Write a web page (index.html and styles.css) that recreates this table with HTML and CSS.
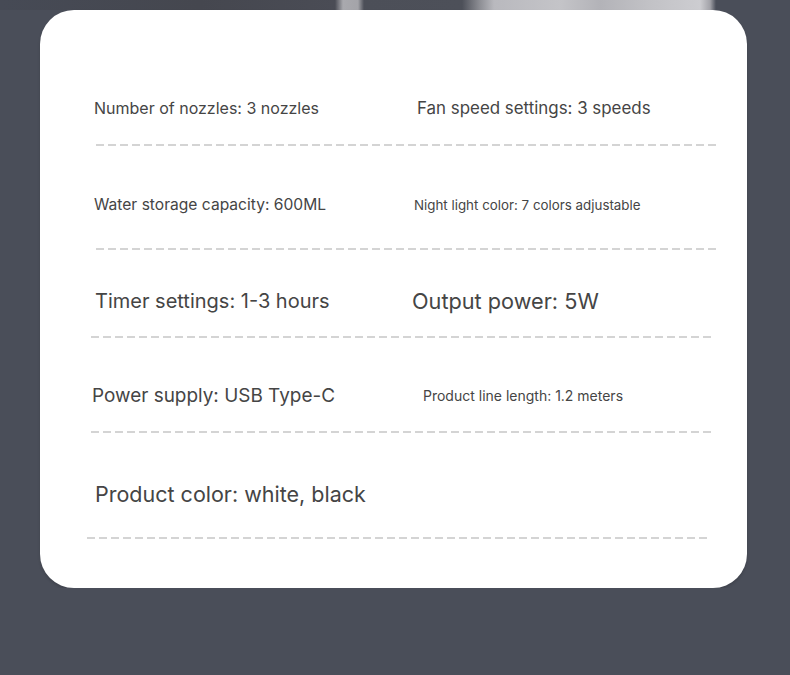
FILE: index.html
```html
<!DOCTYPE html>
<html lang="en">
<head>
<meta charset="utf-8">
<title>Specifications</title>
<link rel="stylesheet" href="styles.css">
</head>
<body>
<div class="topband"></div>
<div class="card">
  <div class="spec r1">
    <div class="pair"><span class="cell a">Number of nozzles: 3 nozzles</span><span class="cell b">Fan speed settings: 3 speeds</span></div>
    <div class="dash"></div>
  </div>
  <div class="spec r2">
    <div class="pair"><span class="cell a">Water storage capacity: 600ML</span><span class="cell b">Night light color: 7 colors adjustable</span></div>
    <div class="dash"></div>
  </div>
  <div class="spec r3">
    <div class="pair"><span class="cell a">Timer settings: 1-3 hours</span><span class="cell b">Output power: 5W</span></div>
    <div class="dash"></div>
  </div>
  <div class="spec r4">
    <div class="pair"><span class="cell a">Power supply: USB Type-C</span><span class="cell b">Product line length: 1.2 meters</span></div>
    <div class="dash"></div>
  </div>
  <div class="spec r5">
    <div class="pair"><span class="cell a">Product color: white, black</span></div>
    <div class="dash"></div>
  </div>
</div>
</body>
</html>
```
FILE: styles.css
```css
html, body {
  margin: 0;
  padding: 0;
  background: #4a4e59;
  font-family: Inter, Roboto, "Liberation Sans", Arial, sans-serif;
  color: #454545;
}

.topband {
  height: 10px;
  background: linear-gradient(to right,
    #464a55 0px, #45474f 200px, #4a4c55 335px,
    #a9a9ae 343px, #a4a4a9 358px, #4c4f58 364px,
    #4d5059 462px, #8e8f95 480px, #b9b9be 494px,
    #c4c4c8 560px, #b3b3b8 600px, #c2c2c6 650px,
    #cdcdd1 700px, #a3a3a9 710px, #4a4e59 716px, #4a4e59 790px);
}

.card {
  width: 707px;
  height: 492px;
  margin-left: 40px;
  padding-top: 86px;
  background: #ffffff;
  border-radius: 34px;
  box-shadow: 0 2px 3px rgba(0, 0, 0, 0.15);
}

.pair {
  display: grid;
  height: 24px;
  align-items: center;
  line-height: 24px;
  white-space: nowrap;
}

.dash {
  height: 2px;
  width: 620px;
  background: repeating-linear-gradient(to right, #d4d4d4 0 8px, transparent 8px 12px);
}

.r1 .pair { padding-left: 54px; grid-template-columns: 323px auto; }
.r1 .a { font-size: 16px; }
.r1 .b { font-size: 16.9px; }
.r1 .dash { margin-top: 24px; margin-left: 56px; }

.r2 { margin-top: 47px; }
.r2 .pair { padding-left: 54px; grid-template-columns: 320px auto; }
.r2 .a { font-size: 15.6px; }
.r2 .b { font-size: 13.35px; }
.r2 .dash { margin-top: 31px; margin-left: 56px; }

.r3 { margin-top: 39px; }
.r3 .pair { padding-left: 55px; grid-template-columns: 317px auto; }
.r3 .a { font-size: 20px; }
.r3 .b { font-size: 21.7px; }
.r3 .dash { margin-top: 23px; margin-left: 51px; }

.r4 { margin-top: 46px; }
.r4 .pair { padding-left: 52px; grid-template-columns: 331px auto; }
.r4 .a { font-size: 18.95px; }
.r4 .b { font-size: 14px; }
.r4 .dash { margin-top: 23px; margin-left: 51px; }

.r5 { margin-top: 49px; }
.r5 .pair { padding-left: 55px; grid-template-columns: auto; }
.r5 .a { font-size: 21.5px; }
.r5 .dash { margin-top: 31px; margin-left: 47px; }
```
